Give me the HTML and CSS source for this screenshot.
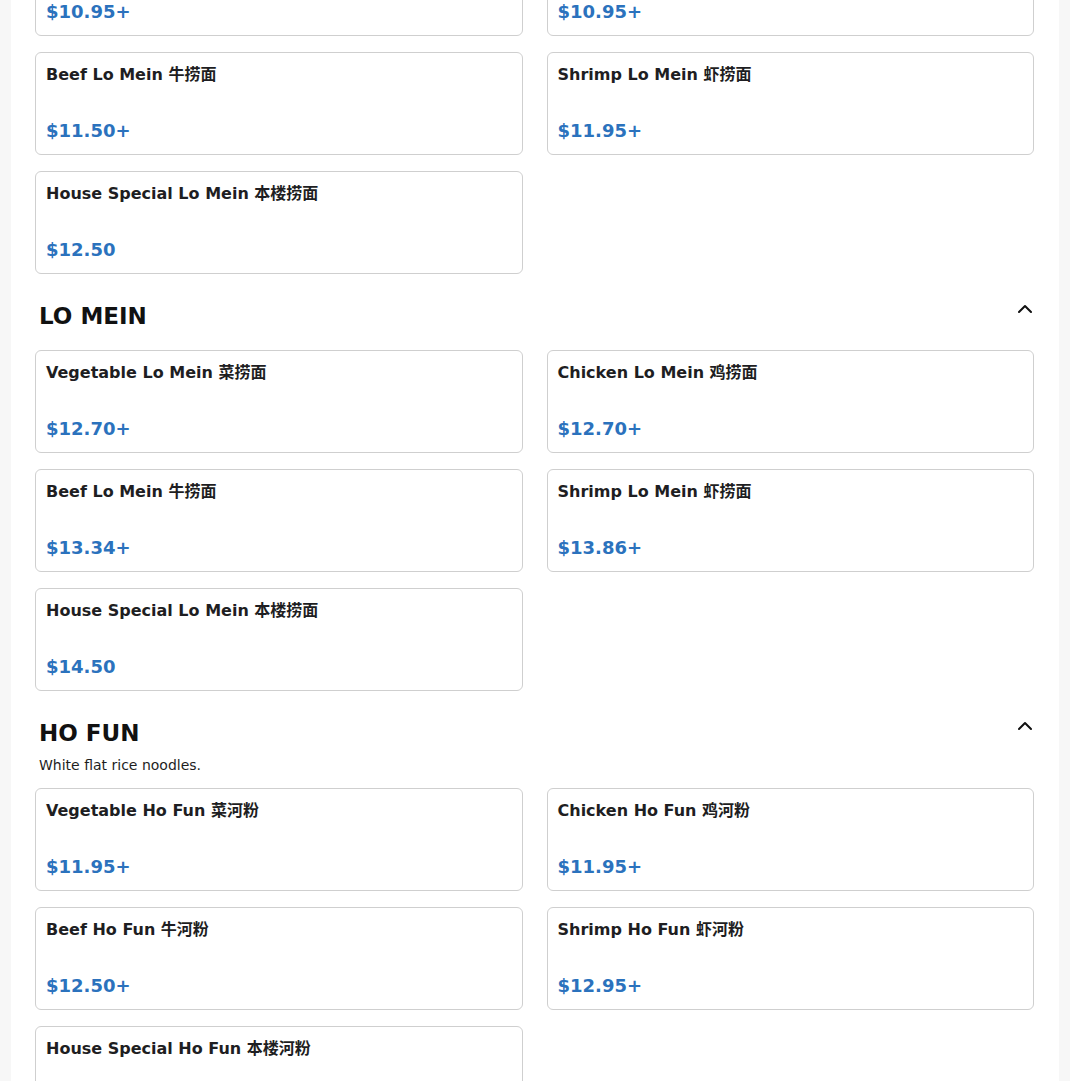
FILE: index.html
```html
<!DOCTYPE html>
<html lang="en">
<head>
<meta charset="utf-8">
<title>Menu</title>
<link rel="stylesheet" href="styles.css">
</head>
<body>
<main class="page">
  <section class="section section-continued">
    <div class="grid grid-first">
      <div class="card"><div class="card-title">Vegetable Lo Mein 菜捞面</div><div class="card-price">$10.95+</div></div>
      <div class="card"><div class="card-title">Chicken Lo Mein 鸡捞面</div><div class="card-price">$10.95+</div></div>
      <div class="card"><div class="card-title">Beef Lo Mein 牛捞面</div><div class="card-price">$11.50+</div></div>
      <div class="card"><div class="card-title">Shrimp Lo Mein 虾捞面</div><div class="card-price">$11.95+</div></div>
      <div class="card"><div class="card-title">House Special Lo Mein 本楼捞面</div><div class="card-price">$12.50</div></div>
    </div>
  </section>

  <section class="section">
    <div class="section-head">
      <div class="section-titles">
        <h2 class="section-title">LO MEIN</h2>
      </div>
      <button class="toggle" aria-label="Collapse"><svg viewBox="0 0 14 14" width="14" height="14"><path d="M1 10 L7 4 L13 10" fill="none" stroke="#111" stroke-width="2" stroke-linecap="round" stroke-linejoin="round"/></svg></button>
    </div>
    <div class="grid">
      <div class="card"><div class="card-title">Vegetable Lo Mein 菜捞面</div><div class="card-price">$12.70+</div></div>
      <div class="card"><div class="card-title">Chicken Lo Mein 鸡捞面</div><div class="card-price">$12.70+</div></div>
      <div class="card"><div class="card-title">Beef Lo Mein 牛捞面</div><div class="card-price">$13.34+</div></div>
      <div class="card"><div class="card-title">Shrimp Lo Mein 虾捞面</div><div class="card-price">$13.86+</div></div>
      <div class="card"><div class="card-title">House Special Lo Mein 本楼捞面</div><div class="card-price">$14.50</div></div>
    </div>
  </section>

  <section class="section">
    <div class="section-head">
      <div class="section-titles">
        <h2 class="section-title">HO FUN</h2>
        <p class="section-desc">White flat rice noodles.</p>
      </div>
      <button class="toggle" aria-label="Collapse"><svg viewBox="0 0 14 14" width="14" height="14"><path d="M1 10 L7 4 L13 10" fill="none" stroke="#111" stroke-width="2" stroke-linecap="round" stroke-linejoin="round"/></svg></button>
    </div>
    <div class="grid">
      <div class="card"><div class="card-title">Vegetable Ho Fun 菜河粉</div><div class="card-price">$11.95+</div></div>
      <div class="card"><div class="card-title">Chicken Ho Fun 鸡河粉</div><div class="card-price">$11.95+</div></div>
      <div class="card"><div class="card-title">Beef Ho Fun 牛河粉</div><div class="card-price">$12.50+</div></div>
      <div class="card"><div class="card-title">Shrimp Ho Fun 虾河粉</div><div class="card-price">$12.95+</div></div>
      <div class="card"><div class="card-title">House Special Ho Fun 本楼河粉</div><div class="card-price">$13.95</div></div>
    </div>
  </section>
</main>
</body>
</html>
```

FILE: styles.css
```css
html, body {
  margin: 0;
  padding: 0;
  height: 100%;
  overflow: hidden;
}

body {
  background: #f7f7f7;
  font-family: "DejaVu Sans", "Noto Sans CJK SC", sans-serif;
  color: #1e1e1e;
}

.page {
  width: 1048px;
  margin: 0 auto;
  background: #ffffff;
  min-height: 100%;
  padding: 0 25px 40px 24px;
  box-sizing: border-box;
}

.section {
  padding-top: 28px;
}

.section-continued {
  padding-top: 0;
}

.grid {
  display: grid;
  grid-template-columns: 1fr 1fr;
  column-gap: 24px;
  row-gap: 16px;
}

.grid-first {
  margin-top: -67px;
}

.card {
  box-sizing: border-box;
  min-height: 103px;
  border: 1px solid #cfcfcf;
  border-radius: 6px;
  padding: 10px;
  display: flex;
  flex-direction: column;
  background: #fff;
}

.card-title {
  font-size: 16px;
  font-weight: bold;
  line-height: 24px;
  color: #1e1e22;
}

.card-price {
  margin-top: auto;
  font-size: 18px;
  font-weight: bold;
  line-height: 27px;
  color: #2b72bd;
}

.section-head {
  display: flex;
  justify-content: space-between;
  align-items: flex-start;
  padding: 0 2px 0 4px;
  margin-bottom: 12px;
}

.section-title {
  margin: 0 0 7px;
  font-size: 23px;
  line-height: 29px;
  font-weight: bold;
  color: #111;
}

.section-desc {
  margin: 0;
  font-size: 14px;
  line-height: 21px;
  color: #1e1e1e;
}

.toggle {
  border: 0;
  background: none;
  padding: 0;
  margin: 0;
  width: 14px;
  height: 14px;
  cursor: pointer;
  display: block;
}

.toggle svg {
  display: block;
}
```
